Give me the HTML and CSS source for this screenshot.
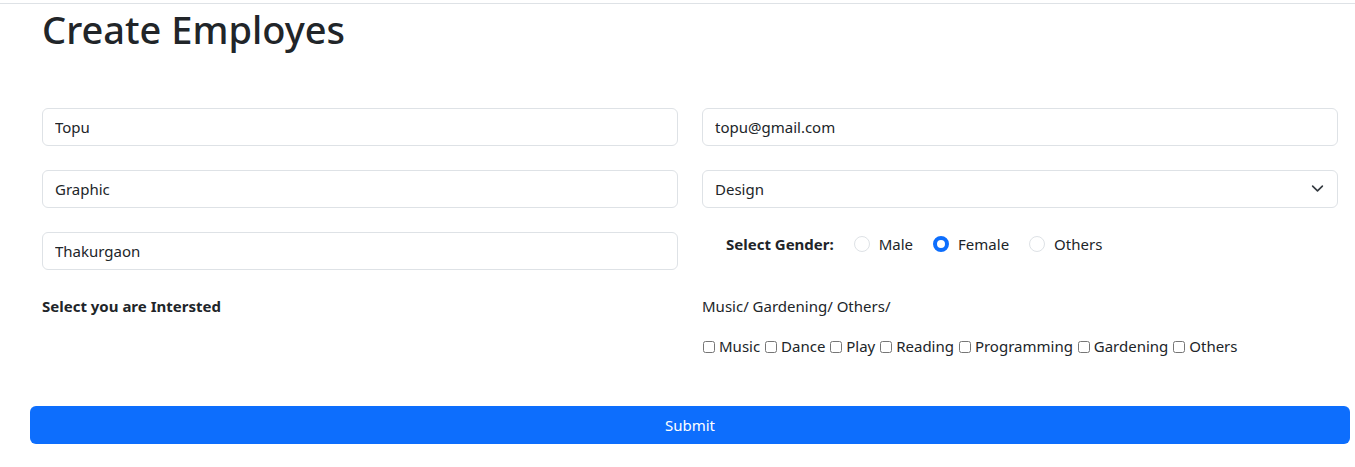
FILE: index.html
```html
<!DOCTYPE html>
<html>
<head>
<meta charset="utf-8">
<link rel="stylesheet" href="styles.css">
</head>
<body>
<div class="topline"></div>
<div class="page">
  <h1 class="title">Create Employes</h1>
  <form class="form">
    <div class="grid">
      <input class="field" type="text" value="Topu">
      <input class="field" type="text" value="topu@gmail.com">
      <input class="field" type="text" value="Graphic">
      <div class="select-wrap">
        <select class="field select">
          <option>Design</option>
        </select>
        <svg class="chev" width="16" height="16" viewBox="0 0 16 16"><path d="M2 5l6 6 6-6" fill="none" stroke="#343a40" stroke-width="2" stroke-linecap="round" stroke-linejoin="round"/></svg>
      </div>
      <input class="field" type="text" value="Thakurgaon">
      <div class="gender">
        <span class="bold">Select Gender:</span>
        <label class="radio"><span class="dot"></span>Male</label>
        <label class="radio"><span class="dot on"></span>Female</label>
        <label class="radio"><span class="dot"></span>Others</label>
      </div>
      <div class="interest-label bold">Select you are Intersted</div>
      <div class="interest">
        <div class="chosen">Music/ Gardening/ Others/</div>
        <div class="checks">
          <label><input type="checkbox" class="cb">Music</label>
          <label><input type="checkbox" class="cb">Dance</label>
          <label><input type="checkbox" class="cb">Play</label>
          <label><input type="checkbox" class="cb">Reading</label>
          <label><input type="checkbox" class="cb">Programming</label>
          <label><input type="checkbox" class="cb">Gardening</label>
          <label><input type="checkbox" class="cb">Others</label>
        </div>
      </div>
    </div>
    <button type="button" class="submit">Submit</button>
  </form>
</div>
</body>
</html>
```
FILE: styles.css
```css
* { box-sizing: border-box; }
body {
  margin: 0;
  font-family: "Noto Sans", "Open Sans", sans-serif;
  font-size: 15px;
  line-height: 20px;
  color: #212529;
  background: #fff;
}
.topline {
  height: 4px;
  border-bottom: 1px solid #dee2e6;
}
.page {
  padding: 0 5px 0 30px;
}
.title {
  margin: 3px 0 0 12px;
  font-size: 38px;
  font-weight: 500;
  line-height: 1.2;
}
.form {
  margin-top: 55px;
}
.grid {
  display: grid;
  grid-template-columns: 1fr 1fr;
  column-gap: 24px;
  row-gap: 24px;
  padding: 0 12px;
}
.field {
  display: block;
  width: 100%;
  height: 38px;
  padding: 0 12px;
  border: 1px solid #dee2e6;
  border-radius: 6px;
  font-family: inherit;
  font-size: 15px;
  color: #212529;
  background: #fff;
}
.select-wrap { position: relative; }
.select { appearance: none; -webkit-appearance: none; }
.chev {
  position: absolute;
  right: 14px;
  top: 12px;
  pointer-events: none;
  width: 13px;
  height: 13px;
}
.bold { font-weight: 700; }
.gender {
  display: flex;
  align-items: center;
  align-self: start;
  padding: 1px 0 0 24px;
  height: 23px;
}
.gender .bold { margin-right: 20px; }
.radio {
  display: flex;
  align-items: center;
  margin-right: 20px;
}
.dot {
  width: 16px;
  height: 16px;
  border: 1px solid #dee2e6;
  border-radius: 50%;
  margin-right: 9px;
  background: #fff;
}
.dot.on {
  border: 4px solid #0d6efd;
}
.interest-label { padding-top: 2px; }
.interest { margin-top: -5px; }
.chosen { padding-top: 7px; }
.checks { margin-top: 20px; }
.cb {
  width: 12px;
  height: 12px;
  margin: 0 4px 0 1px;
  vertical-align: -1px;
}
.submit {
  display: block;
  width: 100%;
  height: 38px;
  margin-top: 50px;
  border: 0;
  border-radius: 6px;
  background: #0d6efd;
  color: #fff;
  font-family: inherit;
  font-size: 15px;
}
```
